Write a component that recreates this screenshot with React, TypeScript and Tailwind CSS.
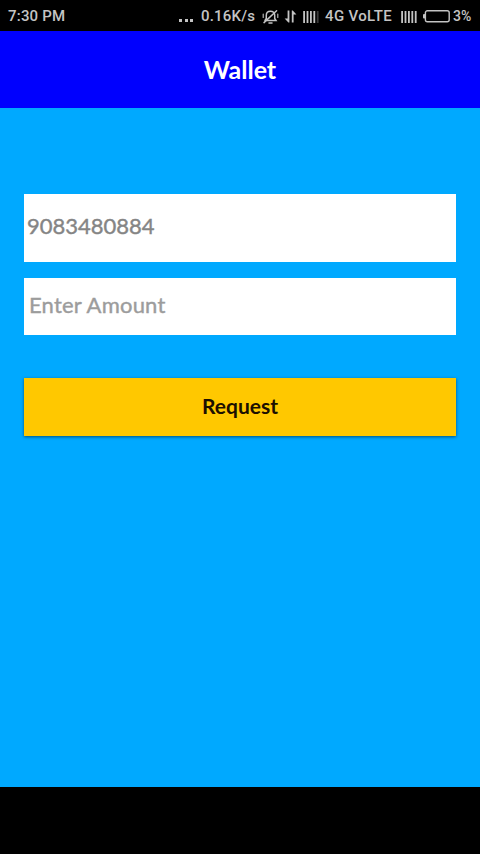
import { useState } from "react";

function SignalBars({ faded = false }: { faded?: boolean }) {
    return (
        <svg width="16" height="12" viewBox="0 0 16 12" fill="#c4c4c4">
            <rect x="0.2" width="1.8" height="12" />
            <rect x="3.6" width="1.8" height="12" />
            <rect x="7" width="1.8" height="12" />
            <rect x="10.4" width="1.8" height="12" />
            <rect x="13.8" width="1.8" height="12" opacity={faded ? 0.3 : 1} />
        </svg>
    )
}

function BellOff() {
    return (
        <svg width="17" height="16" viewBox="0 0 17 16" fill="none" stroke="#c4c4c4" strokeWidth="1.5" strokeLinecap="round">
            <path d="M3 11.5h11l-1.3-2V6.2C12.7 3.8 11 2.2 8.5 2.2S4.3 3.8 4.3 6.2v3.3L3 11.5" />
            <path d="M7 14h3" />
            <path d="M2 13.6L14.6 1.8" />
            <path d="M1.2 5v3.4M15.8 5v3.4" strokeWidth="1.1" />
        </svg>
    )
}

function DataArrows() {
    return (
        <svg width="13" height="13" viewBox="0 0 13 13" fill="#c4c4c4">
            <path d="M3.6 0.5h1.8V12.5H4.4L0.6 8.4h3z" />
            <path d="M7.8 12.5h1.8V4.6h2.8L8.8 0.5h-1z" />
        </svg>
    )
}

function Battery() {
    return (
        <svg width="27" height="13" viewBox="0 0 27 13" fill="none">
            <rect x="2.4" y="0.8" width="23.8" height="11" rx="2" stroke="#c4c4c4" strokeWidth="1.4" />
            <rect x="0" y="4" width="2.4" height="4.6" rx="1" fill="#c4c4c4" />
        </svg>
    )
}

function StatusBar() {
    return (
        <div className="flex h-[31px] items-center bg-black pl-2 pr-2 pt-[2px] font-[Roboto,sans-serif] text-[15px] font-medium tracking-[0.2px] text-[#c4c4c4] whitespace-nowrap">
            <span className="w-[171px]">7:30 PM</span>
            <div className="mr-[8px] mt-[7px] flex w-[14px] justify-between">
                <i className="h-[3px] w-[3px] bg-[#c4c4c4]"></i>
                <i className="h-[3px] w-[3px] bg-[#c4c4c4]"></i>
                <i className="h-[3px] w-[3px] bg-[#c4c4c4]"></i>
            </div>
            <span className="w-[61px]">0.16K/s</span>
            <div className="w-[22px]"><BellOff /></div>
            <div className="w-[19px]"><DataArrows /></div>
            <div className="w-[22px]"><SignalBars faded /></div>
            <span className="w-[76px] tracking-[0.35px]">4G VoLTE</span>
            <div className="w-[22px]"><SignalBars /></div>
            <div className="w-[30px]"><Battery /></div>
            <span className="text-[14px] tracking-normal">3%</span>
        </div>
    )
}

function App() {
    const [data, setData] = useState({
        phone: "9083480884",
        amount: ""
    })

    return (
        <div className="flex h-[854px] w-[480px] flex-col overflow-hidden bg-black font-[Lato,sans-serif]">
            <StatusBar />
            <header className="flex h-[77px] items-center justify-center bg-[#0000fe]">
                <h1 className="text-[25px] font-bold text-white">Wallet</h1>
            </header>
            <form className="flex h-[679px] flex-col bg-[#00a9ff] px-6 pt-[86px]">
                <input
                    type="text"
                    name="phone"
                    value={data.phone}
                    onChange={e => setData({...data, phone: e.target.value})}
                    className="h-[68px] w-full bg-white px-[3px] pb-[5px] text-[22px] text-[#858585] outline-none [-webkit-text-stroke:0.4px]"
                />
                <input
                    type="text"
                    name="amount"
                    placeholder="Enter Amount"
                    value={data.amount}
                    onChange={e => setData({...data, amount: e.target.value})}
                    className="mt-4 h-[57px] w-full bg-white px-[5px] pb-[4px] text-[22px] tracking-[0.2px] text-[#858585] outline-none [-webkit-text-stroke:0.4px] placeholder:text-[#9c9c9c]"
                />
                <button
                    type="button"
                    className="mt-[43px] h-[58px] w-full bg-[#ffc800] pb-[2px] text-[21px] font-bold text-[#1c1000] shadow-[0_1px_3px_rgba(0,0,0,0.5)]"
                >
                    Request
                </button>
            </form>
        </div>
    )
}

export default App;
